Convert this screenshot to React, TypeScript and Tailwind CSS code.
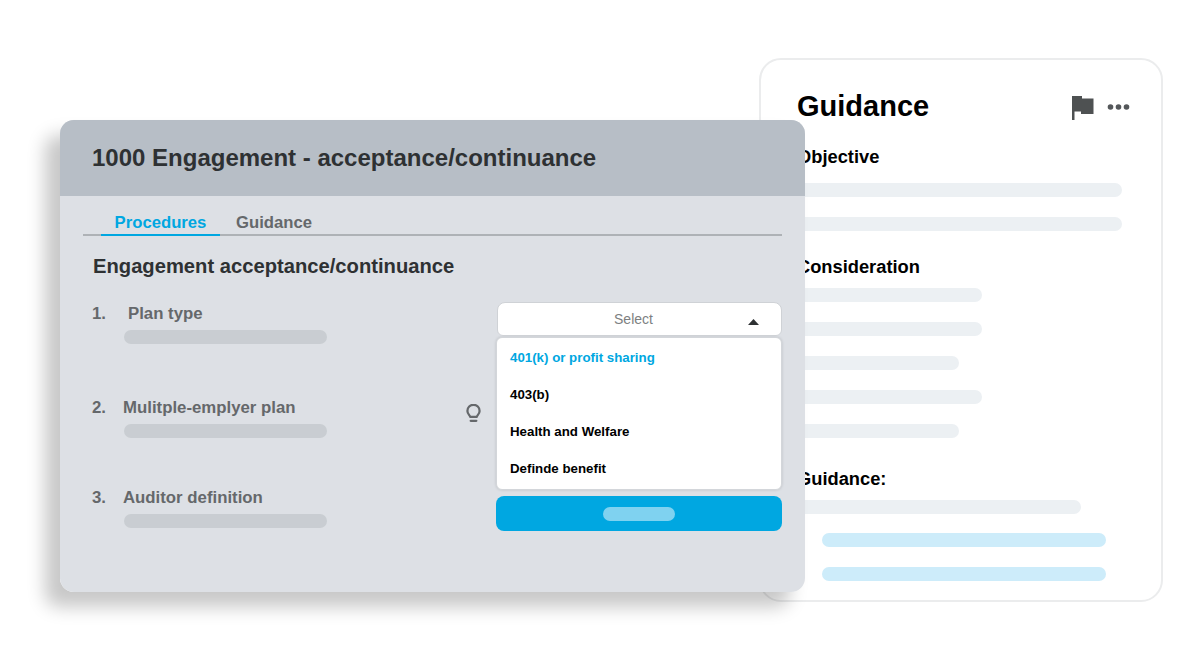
import React from "react";

const Bar = ({ w, c = "bg-[#ecf0f3]" }: { w: string; c?: string }) => <div className={`h-[14px] rounded-[7px] ${w} ${c}`} />;

function Guidance() {
  return (
    <div className="absolute left-[759px] top-[58px] h-[544px] w-[404px] rounded-[22px] border-2 border-[#ebeced] bg-white pl-[36px] pr-[39px] pt-[28px] text-black">
      <div className="flex h-[36px] items-center justify-between">
        <div className="text-[29px] font-bold leading-[36px]">Guidance</div>
        <div className="mr-[-8px] flex items-center gap-[13px]">
          <svg width="23" height="25" viewBox="0 0 23 25" className="mt-[3px]"><path d="M1 1H11V3.500H22.500V19H10V16.500H3.500V25H1Z" fill="#4e5152" /></svg>
          <svg width="23" height="6" viewBox="0 0 23 6" className="mt-[1px]"><circle cx="3.500" cy="3" r="2.800" fill="#54575a" /><circle cx="11.500" cy="3" r="2.800" fill="#54575a" /><circle cx="19.500" cy="3" r="2.800" fill="#54575a" /></svg>
        </div>
      </div>
      <div className="mt-[22px] text-[18.300px] font-bold leading-[22px]">Objective</div>
      <div className="mt-[15px] flex flex-col gap-[20px]"><Bar w="w-[325px]" /><Bar w="w-[325px]" /></div>
      <div className="mt-[25px] text-[18.300px] font-bold leading-[22px]">Consideration</div>
      <div className="mt-[10px] flex flex-col gap-[20px]">
        <Bar w="w-[185px]" /><Bar w="w-[185px]" /><Bar w="w-[162px]" /><Bar w="w-[185px]" /><Bar w="w-[162px]" />
      </div>
      <div className="mt-[30px] text-[18.300px] font-bold leading-[22px]">Guidance:</div>
      <div className="mt-[10px]"><Bar w="w-[284px]" /></div>
      <div className="ml-[25px] mt-[19px] flex flex-col gap-[20px]">
        <Bar w="w-[284px]" c="bg-[#cdecfa]" /><Bar w="w-[284px]" c="bg-[#cdecfa]" />
      </div>
    </div>
  );
}

const Question = ({ n, label, gap, top }: { n: string; label: string; gap: string; top: string }) => (
  <div className={top}>
    <div className="flex h-[20px] items-center text-[16.800px] font-bold leading-[20px] text-[#65686b]">
      <span className="ml-[32px] w-[31px]">{n}</span>
      <span className={gap}>{label}</span>
    </div>
    <div className="ml-[64px] mt-[6px] h-[14px] w-[203px] rounded-[7px] bg-[#c9cdd2]" />
  </div>
);

function Procedures() {
  return (
    <div className="absolute left-[60px] top-[120px] flex h-[472px] w-[745px] flex-col overflow-hidden rounded-[14px] bg-[#dde0e5]">
      <div className="flex h-[76px] shrink-0 items-center bg-[#b7bec6] pl-[32px] text-[24px] font-bold text-[#2e3133]">
        1000 Engagement - acceptance/continuance
      </div>
      <div className="mx-[23px] flex h-[40px] border-b-2 border-[#aeb2b6] text-[16.700px] font-bold leading-[20px]">
        <div className="mb-[-2px] ml-[18px] flex w-[119px] items-end justify-center border-b-2 border-[#00a7e1] pb-[1px] text-[#00a7e1]">Procedures</div>
        <div className="ml-[16px] flex items-end pb-[1px] text-[#65686b]">Guidance</div>
      </div>
      <div className="ml-[33px] mt-[18px] text-[20.200px] font-bold leading-[24px] text-[#2e3133]">Engagement acceptance/continuance</div>
      <div className="relative flex-1">
        <Question n="1." label="Plan type" gap="ml-[5px]" top="mt-[26px]" />
        <Question n="2." label="Mulitple-emplyer plan" gap="" top="mt-[54px]" />
        <Question n="3." label="Auditor definition" gap="" top="mt-[50px]" />

        <svg width="15" height="19" viewBox="0 0 16 20" fill="none" stroke="#65686b" strokeWidth="2.400" className="absolute left-[406px] top-[126px]">
          <path d="M4.500 13.500C4.300 12 1.500 10.500 1.500 7.200a6.500 6.500 0 0 1 13 0C14.500 10.500 11.700 12 11.500 13.500Z" strokeLinejoin="round" />
          <path d="M5 17.800H11" strokeLinecap="round" />
        </svg>

        <div className="absolute left-[437px] top-[24px] w-[285px]">
          <div className="relative flex h-[34px] items-center justify-center rounded-t-[8px] rounded-b-[6px] border border-[#cfd2d6] bg-white pr-[12px] text-[14px] text-[#7d7f82]">
            Select
            <svg width="11" height="6" viewBox="0 0 11 6" className="absolute left-[250px] top-[16px]"><path d="M5.500 0L11 6H0Z" fill="#2e3133" /></svg>
          </div>
          <div className="ml-[-1px] mt-[1px] flex h-[153px] w-[286px] flex-col rounded-[6px] border border-[#d3d6da] bg-white pl-[13px] pt-[1px] text-[13.300px] font-bold text-black shadow-[0_0_3px_rgba(0,0,0,0.15)]">
            <div className="flex h-[37px] items-center text-[#00a7e1]">401(k) or profit sharing</div>
            <div className="flex h-[37px] items-center">403(b)</div>
            <div className="flex h-[37px] items-center">Health and Welfare</div>
            <div className="flex h-[37px] items-center">Definde benefit</div>
          </div>
          <div className="ml-[-1px] mt-[6px] flex h-[35px] w-[286px] items-center justify-center rounded-[8px] bg-[#00a7e1]">
            <div className="h-[14px] w-[72px] rounded-[7px] bg-[#7fd2f0]" />
          </div>
        </div>
      </div>
    </div>
  );
}

export default function App() {
  return (
    <div className="relative h-[660px] w-[1200px] overflow-hidden bg-white font-['Liberation_Sans',sans-serif]">
      <Guidance />
      <div className="absolute left-[60px] top-[120px] h-[472px] w-[745px] rounded-[14px] shadow-[-15px_15px_18px_rgba(0,0,0,0.22)]" />
      <Procedures />
    </div>
  );
}
